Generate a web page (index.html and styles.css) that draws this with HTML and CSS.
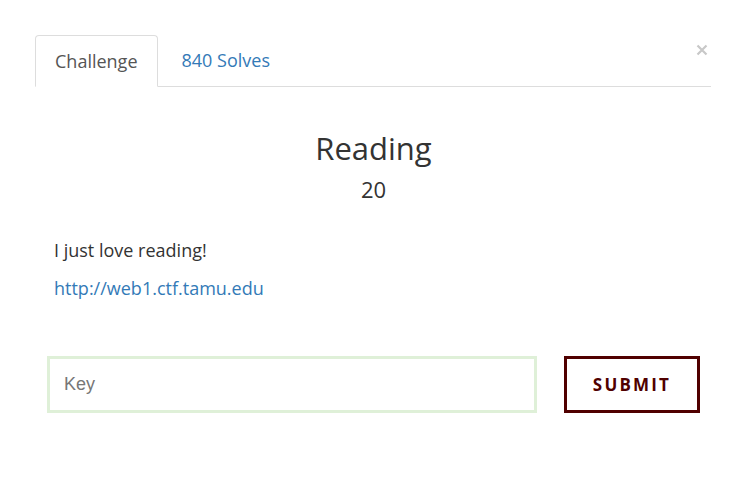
FILE: index.html
```html
<!DOCTYPE html>
<html>
<head>
<meta charset="utf-8">
<link rel="stylesheet" href="styles.css">
</head>
<body>
<div class="modal">
  <button class="close" aria-label="Close">
    <svg width="12" height="12" viewBox="0 0 12 12"><path d="M1.5 1.5 L10.5 10.5 M10.5 1.5 L1.5 10.5" stroke="#c8c8c8" stroke-width="2.2" fill="none"/></svg>
  </button>
  <ul class="tabs">
    <li class="tab active">Challenge</li>
    <li class="tab"><a href="#">840 Solves</a></li>
  </ul>
  <div class="content">
    <h2 class="title">Reading</h2>
    <h4 class="value">20</h4>
    <div class="desc">
      <p>I just love reading!</p>
      <p><a href="#">http://web1.ctf.tamu.edu</a></p>
    </div>
    <form class="submit-row">
      <input class="key" type="text" placeholder="Key">
      <button class="submit" type="button">SUBMIT</button>
    </form>
  </div>
</div>
</body>
</html>
```
FILE: styles.css
```css
html, body {
  margin: 0;
  padding: 0;
  background: #fff;
}
body {
  font-family: "Open Sans", "Noto Sans", sans-serif;
  color: #333;
}
.modal {
  position: relative;
  padding: 35px 36px 0 35px;
}
.close {
  position: absolute;
  top: 44px;
  right: 39px;
  padding: 0;
  border: 0;
  background: none;
  width: 12px;
  height: 12px;
  display: block;
}
.close svg { display: block; }
.tabs {
  list-style: none;
  margin: 0;
  padding: 0;
  display: flex;
  border-bottom: 1px solid #ddd;
}
.tab {
  height: 50px;
  box-sizing: border-box;
  padding: 0 19px 0 19px;
  margin-bottom: -1px;
  display: flex;
  align-items: center;
  font-size: 18px;
  line-height: 1;
  color: #555;
  border: 1px solid transparent;
  border-radius: 4px 4px 0 0;
  margin-right: 4px;
}
.tab.active {
  border-color: #ddd;
  border-bottom-color: #fff;
  background: #fff;
  height: 52px;
}
.tab a {
  color: #337ab7;
  text-decoration: none;
}
.content {
  padding: 0 11px 0 12px;
}
.title {
  margin: 41px 0 0 0;
  text-align: center;
  font-weight: 400;
  font-size: 31px;
  line-height: 40px;
  color: #333;
}
.value {
  margin: 6px 0 0 0;
  text-align: center;
  font-weight: 400;
  font-size: 22px;
  line-height: 30px;
  color: #333;
}
.desc {
  margin-top: 34px;
  padding-left: 7px;
  font-size: 18px;
  line-height: 24px;
}
.desc p {
  margin: 0 0 14px 0;
}
.desc a {
  color: #337ab7;
  text-decoration: none;
}
.submit-row {
  display: flex;
  gap: 27px;
  margin-top: 56px;
}
.key {
  flex: 1;
  height: 57px;
  box-sizing: border-box;
  border: 3px solid #dff0d8;
  padding: 0 14px;
  font-family: "Liberation Sans", Arial, sans-serif;
  font-size: 18px;
  color: #555;
  outline: none;
  margin: 0;
}
.key::placeholder { color: #777; }
.submit {
  width: 136px;
  height: 57px;
  box-sizing: border-box;
  border: 3px solid #500000;
  background: #fff;
  color: #500000;
  font-family: "Open Sans", "Noto Sans", sans-serif;
  font-weight: 700;
  font-size: 17px;
  letter-spacing: 2.2px;
  margin: 0;
  padding: 0;
}
```
